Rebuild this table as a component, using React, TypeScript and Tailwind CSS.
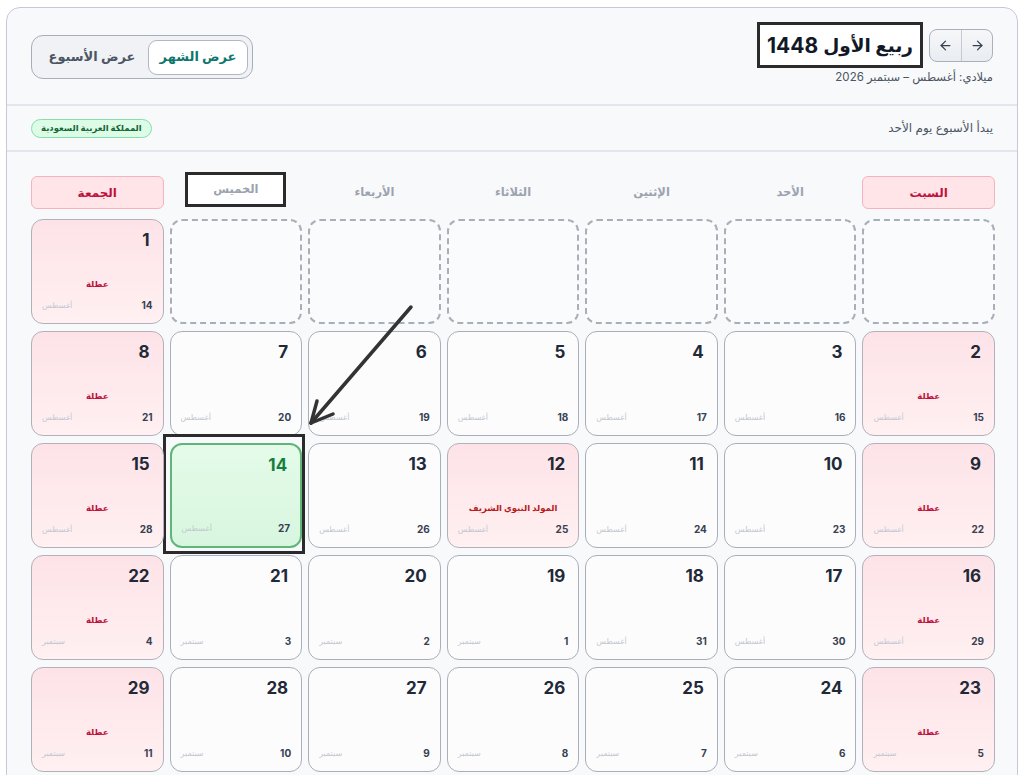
import React from "react";
import { ArrowLeft, ArrowRight } from "lucide-react";

type Cell = null | { h: number; g: number; m: string; col: number };

const days = ["السبت", "الأحد", "الإثنين", "الثلاثاء", "الأربعاء", "الخميس", "الجمعة"];

function buildCells(): Cell[] {
  const out: Cell[] = [];
  for (let i = 0; i < 6; i++) out.push(null);
  for (let d = 1; d <= 29; d++) {
    let g = 13 + d;
    let m = "أغسطس";
    if (g > 31) {
      g -= 31;
      m = "سبتمبر";
    }
    out.push({ h: d, g, m, col: out.length % 7 });
  }
  return out;
}

function DayCell({ c }: { c: Cell }) {
  if (!c) {
    return <div className="h-[105px] rounded-[12px] border-[2px] border-dashed border-[#a9aeb9] bg-[#fafbfc]" />;
  }
  const holiday = c.col === 0 || c.col === 6;
  const mawlid = c.h === 12;
  const today = c.h === 14;
  let cls = "border-[#a8aebb] bg-[#fcfcfd]";
  if (holiday || mawlid) cls = "border-[#b3b0bb] bg-gradient-to-b from-[#fde3e7] to-[#fff0f2]";
  if (today) cls = "border-[#5fb678] border-[2px] bg-gradient-to-b from-[#e4fbe9] to-[#d8f6df]";
  return (
    <div className={`relative h-[105px] rounded-[12px] border-[1.5px] ${cls} flex flex-col pt-[8px] px-[10px] pb-[11px]`}>
      {today && (
        <div className="absolute left-[-9px] right-[-5px] top-[-11px] bottom-[-8px] border-[3px] border-[#2b2b2b] pointer-events-none" />
      )}
      <div
        className={`text-[17px] leading-[24px] font-bold pr-[3px] ${today ? "text-[#15803d]" : "text-[#1f2937]"}`}
      >
        {c.h}
      </div>
      <div className="flex-1 flex items-end justify-center pb-[8px]">
        {holiday && <span className="text-[8.5px] leading-[12px] font-bold text-[#be123c]">عطلة</span>}
        {mawlid && <span className="text-[8.5px] leading-[12px] font-bold text-[#b91c1c]">المولد النبوي الشريف</span>}
      </div>
      <div className="flex justify-between items-center h-[14px]">
        <span className="text-[10px] font-bold text-[#374151]">{c.g}</span>
        <span className="text-[8px] text-[#c3c7cf]">{c.m}</span>
      </div>
    </div>
  );
}

export default function App() {
  const cells = buildCells();
  return (
    <div
      dir="rtl"
      className="relative w-[1024px] h-[775px] overflow-hidden bg-white font-[family-name:Inter,DejaVu_Sans,sans-serif] text-[#1f2937]"
    >
      <div className="mx-[6px] mt-[7px] h-[790px] rounded-[14px] border-[1.5px] border-[#c5cad6] bg-[#f8f9fb]">
        {/* header */}
        <div className="h-[98px] px-[24px] flex justify-between items-start border-b-2 border-[#e3e6ed]">
          <div className="pt-[14px] flex flex-col items-start">
            <div className="flex items-center gap-[6px]">
              <div className="flex h-[33px] rounded-[8px] border-[1.5px] border-[#aab0bd] bg-gradient-to-b from-[#f6f7f9] to-[#e9ecf1] overflow-hidden">
                <div className="w-[31px] flex items-center justify-center border-l border-[#c4c9d3]">
                  <ArrowRight size={15} strokeWidth={2} className="text-[#374151]" />
                </div>
                <div className="w-[31px] flex items-center justify-center">
                  <ArrowLeft size={15} strokeWidth={2} className="text-[#374151]" />
                </div>
              </div>
              <div className="h-[46px] px-[7px] flex items-center gap-[5px] border-[3px] border-[#2b2b2b] bg-white text-[#111827] font-bold leading-none">
                <span className="text-[18.5px]">ربيع الأول</span>
                <span className="text-[21px]">1448</span>
              </div>
            </div>
            <div className="mt-[1px] text-[11.5px] text-[#4b5563] leading-[16px]">ميلادي: أغسطس – سبتمبر 2026</div>
          </div>
          <div className="mt-[27px] flex items-center h-[44px] rounded-[12px] border-[1.5px] border-[#a7adb9] bg-[#f0f2f5] p-[4px]">
            <div className="h-[35px] w-[100px] flex items-center justify-center rounded-[9px] border border-[#b0b6c2] bg-white text-[13px] font-bold text-[#0f766e]">
              عرض الشهر
            </div>
            <div className="h-[35px] w-[112px] flex items-center justify-center text-[13px] font-semibold text-[#4b5563]">
              عرض الأسبوع
            </div>
          </div>
        </div>
        {/* subheader */}
        <div className="h-[46px] px-[24px] flex items-center justify-between border-b-2 border-[#e3e6ed]">
          <span className="text-[12px] text-[#4b5563]">يبدأ الأسبوع يوم الأحد</span>
          <span className="h-[19px] px-[9px] flex items-center rounded-full border border-[#86e0a4] bg-[#dcfce7] text-[8.5px] font-bold text-[#166534]">
            المملكة العربية السعودية
          </span>
        </div>
        {/* grid */}
        <div className="pt-[24px] pr-[22px] pl-[24px]">
          <div className="grid grid-cols-7 gap-x-[6px] mb-[10px]">
            {days.map((d, i) => {
              const hol = i === 0 || i === 6;
              if (hol)
                return (
                  <div
                    key={d}
                    className="h-[33px] flex items-center justify-center rounded-[6px] border-[1.5px] border-[#f6b3bf] bg-[#ffe4e8] text-[12px] font-bold text-[#be123c]"
                  >
                    {d}
                  </div>
                );
              if (i === 5)
                return (
                  <div key={d} className="h-[33px] flex items-start justify-center">
                    <div className="mt-[-4px] w-[101px] h-[35px] flex items-center justify-center border-[3px] border-[#2b2b2b] bg-white text-[11.5px] font-semibold text-[#9ca3af]">
                      {d}
                    </div>
                  </div>
                );
              return (
                <div key={d} className="h-[33px] flex items-center justify-center text-[11.5px] font-semibold text-[#9ca3af]">
                  {d}
                </div>
              );
            })}
          </div>
          <div className="grid grid-cols-7 gap-x-[6px] gap-y-[7px]">
            {cells.map((c, i) => (
              <DayCell key={i} c={c} />
            ))}
          </div>
        </div>
      </div>
      <svg className="absolute left-0 top-0 pointer-events-none" width="1024" height="775" viewBox="0 0 1024 775">
        <g stroke="#333333" strokeWidth="3.5" strokeLinecap="round" fill="none">
          <line x1="411" y1="307" x2="311" y2="423" />
          <line x1="311" y1="423" x2="317" y2="401" />
          <line x1="311" y1="423" x2="333" y2="414" />
        </g>
      </svg>
    </div>
  );
}
